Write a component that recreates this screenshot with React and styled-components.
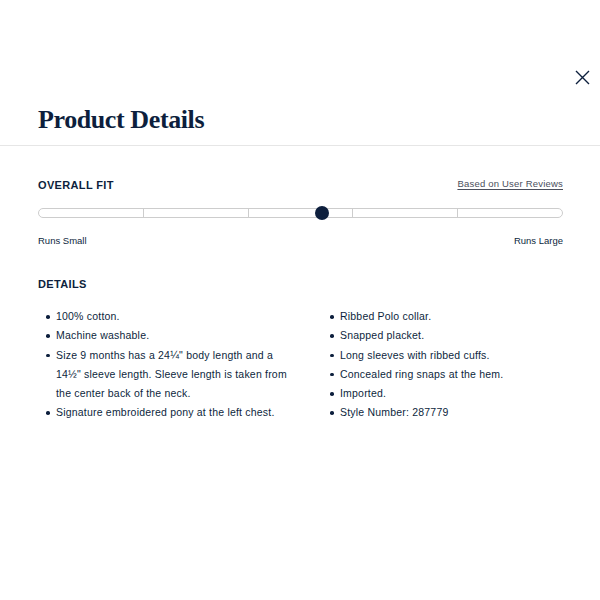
import React from "react";
import styled, { createGlobalStyle } from "styled-components";

const navy = "#0d1f3d";

const GlobalStyle = createGlobalStyle`
  body {
    margin: 0;
    background: #fff;
    font-family: "Liberation Sans", Arial, sans-serif;
    color: ${navy};
  }
`;

const leftItems = [
  "100% cotton.",
  "Machine washable.",
  "Size 9 months has a 24¼\" body length and a 14½\" sleeve length. Sleeve length is taken from the center back of the neck.",
  "Signature embroidered pony at the left chest.",
];

const rightItems = [
  "Ribbed Polo collar.",
  "Snapped placket.",
  "Long sleeves with ribbed cuffs.",
  "Concealed ring snaps at the hem.",
  "Imported.",
  "Style Number: 287779",
];

const App = () => {
  return (
    <Modal>
      <GlobalStyle />
      <Header>
        <CloseRow>
          <CloseButton aria-label="Close">
            <svg width="15" height="15" viewBox="0 0 15 15">
              <path d="M1 1 L14 14 M14 1 L1 14" stroke={navy} strokeWidth="1.4" fill="none" />
            </svg>
          </CloseButton>
        </CloseRow>
        <Title>Product Details</Title>
      </Header>

      <Content>
        <FitHeader>
          <SectionTitle>Overall Fit</SectionTitle>
          <ReviewsLink href="#">Based on User Reviews</ReviewsLink>
        </FitHeader>

        <Track>
          {[0, 1, 2, 3, 4].map((i) => (
            <Segment key={i} first={i === 0} />
          ))}
          <Knob style={{ left: "54.1%" }} />
        </Track>

        <RangeLabels>
          <span>Runs Small</span>
          <span>Runs Large</span>
        </RangeLabels>

        <DetailsTitle>Details</DetailsTitle>

        <Columns>
          <List>
            {leftItems.map((t) => (
              <Item key={t}>{t}</Item>
            ))}
          </List>
          <List>
            {rightItems.map((t) => (
              <Item key={t}>{t}</Item>
            ))}
          </List>
        </Columns>
      </Content>
    </Modal>
  );
};

export default App;

const Modal = styled.div`
  width: 600px;
  min-height: 600px;
  background: #fff;
`;

const Header = styled.div`
  padding: 70px 10px 8px 38px;
  border-bottom: 1px solid #e6e6e6;
`;

const CloseRow = styled.div`
  display: flex;
  justify-content: flex-end;
`;

const CloseButton = styled.button`
  border: none;
  background: none;
  padding: 0;
  width: 15px;
  height: 15px;
  cursor: pointer;
  display: flex;
`;

const Title = styled.h1`
  margin: 18px 0 0;
  font-family: "Liberation Serif", "Times New Roman", serif;
  font-weight: 700;
  font-size: 26px;
  line-height: 34px;
  letter-spacing: -0.4px;
  color: ${navy};
`;

const Content = styled.div`
  padding: 0 37px 0 38px;
`;

const FitHeader = styled.div`
  display: flex;
  justify-content: space-between;
  align-items: center;
  margin-top: 31px;
`;

const SectionTitle = styled.h2`
  margin: 0;
  font-size: 11px;
  font-weight: 700;
  letter-spacing: 0.35px;
  text-transform: uppercase;
  line-height: 16px;
  color: ${navy};
`;

const ReviewsLink = styled.a`
  font-size: 9.5px;
  color: #4b4f5c;
  text-decoration: underline;
  text-underline-offset: 2px;
  letter-spacing: 0.2px;
  margin-top: -4px;
`;

const Track = styled.div`
  position: relative;
  display: flex;
  height: 8px;
  margin-top: 15px;
  border: 1px solid #cdcdcd;
  border-radius: 5px;
`;

const Segment = styled.div`
  flex: 1;
  border-left: ${(p) => (p.first ? "none" : "1px solid #cdcdcd")};
`;

const Knob = styled.div`
  position: absolute;
  top: 50%;
  width: 14px;
  height: 14px;
  border-radius: 50%;
  background: ${navy};
  transform: translate(-50%, -50%);
`;

const RangeLabels = styled.div`
  display: flex;
  justify-content: space-between;
  margin-top: 16px;
  font-size: 9.5px;
  line-height: 14px;
  color: ${navy};
`;

const DetailsTitle = styled(SectionTitle)`
  margin-top: 28px;
`;

const Columns = styled.div`
  display: grid;
  grid-template-columns: 250px 1fr;
  column-gap: 34px;
  margin-top: 15px;
`;

const List = styled.ul`
  list-style: none;
  margin: 0;
  padding: 0;
`;

const Item = styled.li`
  position: relative;
  padding-left: 18px;
  font-size: 10.5px;
  line-height: 19.3px;
  letter-spacing: 0.2px;
  color: ${navy};

  &::before {
    content: "";
    position: absolute;
    left: 8px;
    top: 8px;
    width: 3.5px;
    height: 3.5px;
    border-radius: 50%;
    background: ${navy};
  }
`;
